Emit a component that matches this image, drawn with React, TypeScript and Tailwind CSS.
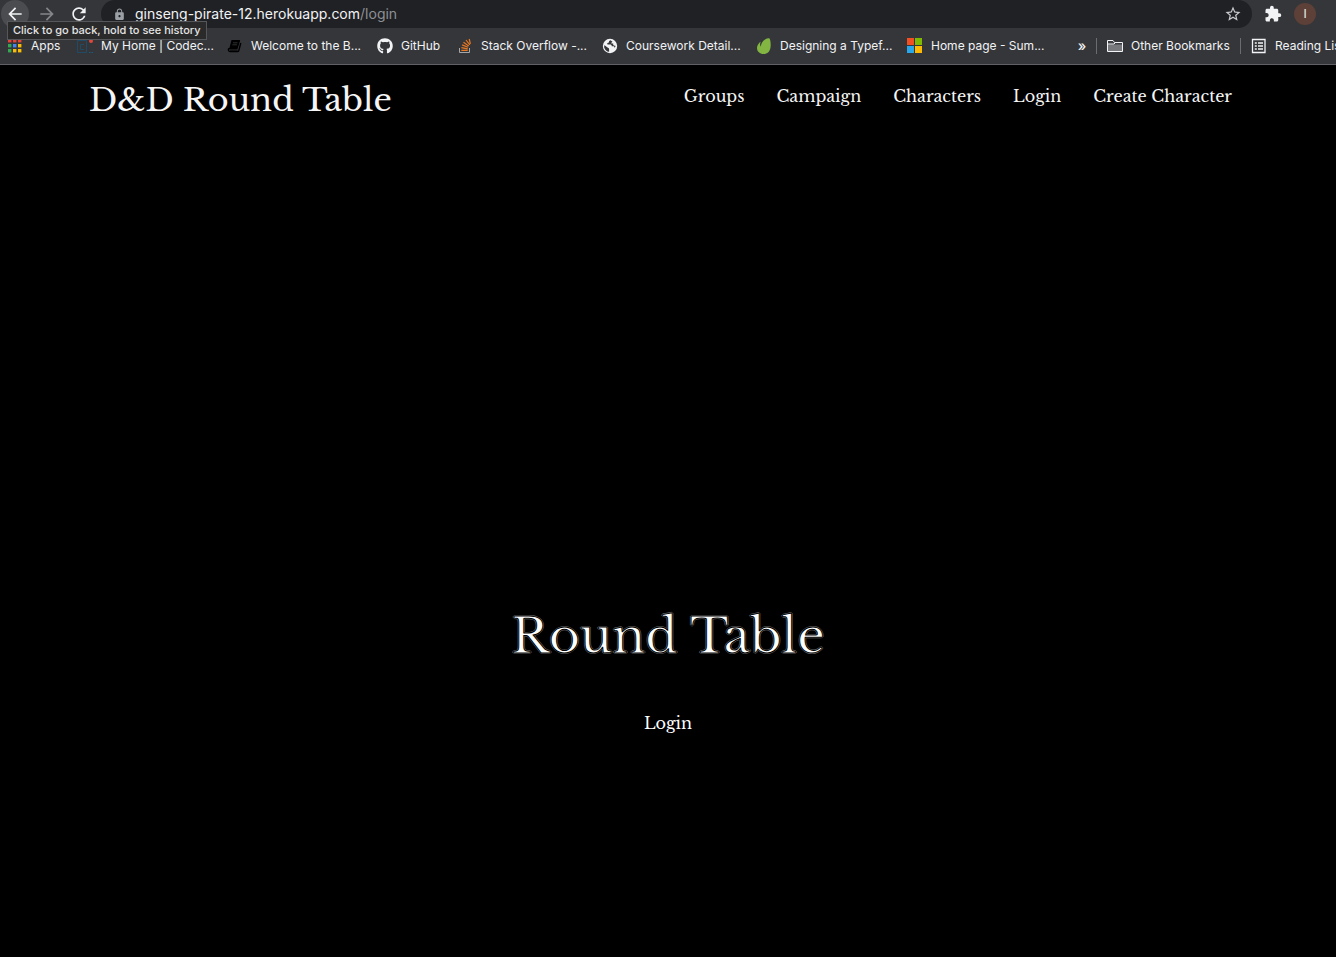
import type { ReactNode } from "react";
import { MdArrowBack, MdArrowForward, MdRefresh, MdLock, MdStarBorder, MdExtension } from "react-icons/md";
import { FaGithub } from "react-icons/fa";

const appColors = [
  "#ea4335", "#ea4335", "#ea4335",
  "#34a853", "#4285f4", "#fbbc05",
  "#34a853", "#fbbc05", "#fbbc05",
];

function AppsIcon() {
  return (
    <svg width="16" height="16" viewBox="0 0 16 16" aria-hidden="true">
      {appColors.map((color, i) => (
        <rect key={i} x={1 + (i % 3) * 5} y={1 + Math.floor(i / 3) * 5} width="3.4" height="3.4" fill={color} />
      ))}
    </svg>
  );
}

function CodecademyIcon() {
  return (
    <svg width="16" height="16" viewBox="0 0 16 16" fill="none" aria-hidden="true">
      <path d="M.5 2.500h9v12H.5z" stroke="#204a66" />
      <path d="M7 6.500H3.500v5H7" stroke="#204a66" />
      <path d="M12 14.500h1.500M14.500 14.500H16" stroke="#1d5a80" />
      <circle cx="14" cy="3" r="2" fill="#e0483d" />
    </svg>
  );
}

function BookIcon() {
  return (
    <svg width="16" height="16" viewBox="0 0 16 16" fill="none" aria-hidden="true">
      <path d="M5 2.500h7.500L10 10.500H3z" fill="#000" stroke="#000" strokeWidth="1.200" strokeLinejoin="round" />
      <path d="M3 10.500q-1.800 0-1.600 1.500Q1.600 13.500 3 13.500h7.500q1 0 1.300-1L13.800 5" stroke="#000" strokeWidth="1.400" />
      <path d="M3 12h7.500" stroke="#000" />
      <path d="M6 4.800h4.500M5.400 6.800h4.500" stroke="#3a3b3e" strokeWidth=".8" />
    </svg>
  );
}

function StackIcon() {
  return (
    <svg width="16" height="16" viewBox="0 0 16 16" fill="none" aria-hidden="true">
      <path d="M2.500 10v4.500h10V10" stroke="#a5a6a8" />
      <path d="M4.300 12.300h6.400M4.400 9.700l6.300 1.100M5.100 6.900l5.900 2.400M6.500 4.200l5.200 3.700M9 2l3.800 4.800M12.200 1l1.200 4.800" stroke="#e87922" strokeWidth="1.200" />
    </svg>
  );
}

function GlobeIcon() {
  return (
    <svg width="16" height="16" viewBox="0 0 16 16" aria-hidden="true">
      <circle cx="8" cy="8" r="7.200" fill="#f1f3f4" />
      <path d="M8.500 2.200q-1.800.4-1.600 1.900.1.900-1.400 1-.6.500 0 1.400h3.300q1 .5 1 1.800h2q1 .6.800 1.700 1-1.300.9-2.300-1.800.2-2.300-.8V5.500H9.300q-.2-1.300 1.200-1.700z" fill="#35363a" />
      <path d="M2.200 7.500q.2-.6.700 0l3 2.200q1.300.1 1.200 1.400v2.700Q3.500 13.500 2.200 9.500z" fill="#35363a" />
    </svg>
  );
}

function LeafIcon() {
  return (
    <svg width="16" height="16" viewBox="0 0 16 16" aria-hidden="true">
      <path d="M13 .3C10 0 5.500 3 4.800 8.200c0 .3-.2.300-.3 0C4 6.800 4 5.600 4.500 4.200c.1-.3-.2-.5-.4-.2C2.500 5.500 1 7.500 1 10c0 3.600 3 6 6.500 6 4 0 6.500-2.700 7-6.500C15 6 14.500 2 13.500.6 13.400.400 13.200.3 13 .3z" fill="#82b541" />
    </svg>
  );
}

function MicrosoftIcon() {
  return (
    <svg width="16" height="16" viewBox="0 0 16 16" aria-hidden="true">
      <path fill="#f25022" d="M0 0h7v7H0z" />
      <path fill="#7fba00" d="M8 0h7v7H8z" />
      <path fill="#28a8ea" d="M0 8h7v7H0z" />
      <path fill="#ffb900" d="M8 8h7v7H8z" />
    </svg>
  );
}

function FolderIcon() {
  return (
    <svg width="16" height="16" viewBox="0 0 16 16" aria-hidden="true">
      <path d="M.5 13.500v-11H6l1.500 2h8v9z" fill="#3a3b3e" stroke="#f1f3f4" />
      <path d="M1 6.500h14V13H1z" fill="#77787b" />
      <path d="M1 6h6l1.500-1.500" stroke="#f1f3f4" fill="none" />
    </svg>
  );
}

function ReadingIcon() {
  return (
    <svg width="16" height="16" viewBox="0 0 16 16" fill="none" stroke="#f1f3f4" aria-hidden="true">
      <path d="M1.500 1.500h12.500v13H1.500z" strokeWidth="1.300" />
      <path d="M3.800 5h2M7 5h5M3.800 8h2M7 8h5M3.800 11h2M7 11h5" strokeWidth="1.300" />
    </svg>
  );
}

const bookmarks: { label: string; width: string; icon: ReactNode }[] = [
  { label: "Apps", width: "w-[30px]", icon: <AppsIcon /> },
  { label: "My Home | Codec...", width: "w-[110px]", icon: <CodecademyIcon /> },
  { label: "Welcome to the B...", width: "w-[110px]", icon: <BookIcon /> },
  { label: "GitHub", width: "w-[40px]", icon: <FaGithub size={16} /> },
  { label: "Stack Overflow -...", width: "w-[105px]", icon: <StackIcon /> },
  { label: "Coursework Detail...", width: "w-[114px]", icon: <GlobeIcon /> },
  { label: "Designing a Typef...", width: "w-[111px]", icon: <LeafIcon /> },
  { label: "Home page - Sum...", width: "w-[112px]", icon: <MicrosoftIcon /> },
];

function BrowserBar() {
  return (
    <header className="relative overflow-hidden border-b border-[#606164] bg-[#35363a] font-['Inter','Roboto',sans-serif] text-[#f1f3f4]">
      <div className="flex h-7 items-center">
        <button aria-label="Back" className="ml-px flex size-7 shrink-0 items-center justify-center rounded-full bg-[#4b4c50]">
          <MdArrowBack size={20} />
        </button>
        <button aria-label="Forward" className="ml-1 flex size-7 shrink-0 items-center justify-center text-[#85868a]">
          <MdArrowForward size={20} />
        </button>
        <button aria-label="Reload" className="ml-1 flex size-7 shrink-0 items-center justify-center">
          <MdRefresh size={20} />
        </button>
        <div className="ml-2 flex h-7 min-w-0 flex-1 items-center rounded-full bg-[#202124] pr-2.5 pl-3">
          <MdLock size={13} className="shrink-0 text-[#9aa0a6]" />
          <a href="#login" className="ml-[9px] flex-1 truncate text-sm">
            ginseng-pirate-12.herokuapp.com<span className="text-[#8d9094]">/login</span>
          </a>
          <button aria-label="Bookmark this page" className="text-[#c8cacd]">
            <MdStarBorder size={18} />
          </button>
        </div>
        <button aria-label="Extensions" className="ml-3 shrink-0">
          <MdExtension size={18} />
        </button>
        <button aria-label="Profile" className="mr-5 ml-3 flex size-[22px] shrink-0 items-center justify-center rounded-full bg-[#5d4037] text-xs">
          I
        </button>
      </div>
      <nav aria-label="Bookmarks" className="flex h-9 items-center pl-[7px] text-xs whitespace-nowrap">
        <ul className="flex shrink-0 gap-4">
          {bookmarks.map((b) => (
            <li key={b.label}>
              <a href="#bookmark" className="flex items-center gap-2">
                <span className="w-4 shrink-0">{b.icon}</span>
                <span className={b.width}>{b.label}</span>
              </a>
            </li>
          ))}
        </ul>
        <button aria-label="More bookmarks" className="ml-[34px] w-2.5 shrink-0 text-sm leading-4 font-medium">»</button>
        <span className="ml-[9px] h-4 w-px shrink-0 bg-[#6b6c70]" />
        <a href="#other" className="ml-2.5 flex shrink-0 items-center gap-2">
          <FolderIcon />
          <span className="w-[99px]">Other Bookmarks</span>
        </a>
        <span className="ml-2.5 h-4 w-px shrink-0 bg-[#6b6c70]" />
        <a href="#reading" className="ml-2.5 flex shrink-0 items-center gap-2">
          <ReadingIcon />
          Reading List
        </a>
      </nav>
      <div role="tooltip" className="absolute top-[21px] left-[7px] flex h-[19px] items-center border border-[#56575a] bg-[#2a2a2b] px-[5px] text-[11px] font-medium whitespace-nowrap text-[#e4e4e4]">
        Click to go back, hold to see history
      </div>
    </header>
  );
}

const links = ["Groups", "Campaign", "Characters", "Login", "Create Character"];

export default function App() {
  return (
    <div className="min-h-screen bg-black font-['Libre_Baskerville','Liberation_Serif',serif] text-[#f5f5f5]">
      <BrowserBar />
      <div className="mx-auto flex max-w-[1158px] items-start justify-between pt-2.5 pr-[15px]">
        <a href="#home" className="text-[32px] leading-[50px]">D&amp;D Round Table</a>
        <nav aria-label="Main" className="flex gap-8 pt-[5px] text-base leading-8">
          {links.map((link) => (
            <a key={link} href="#page">{link}</a>
          ))}
        </nav>
      </div>
      <main className="flex flex-col items-center pt-[471px] pb-12">
        <h1 className="text-5xl leading-20 text-white [-webkit-text-stroke:1px_black] [text-shadow:1px_0_#666,-1px_0_#666,0_1px_#666,0_-1px_#666]">
          Round Table
        </h1>
        <a href="#login" className="mt-[31px] text-base leading-8 text-white">Login</a>
      </main>
    </div>
  );
}
